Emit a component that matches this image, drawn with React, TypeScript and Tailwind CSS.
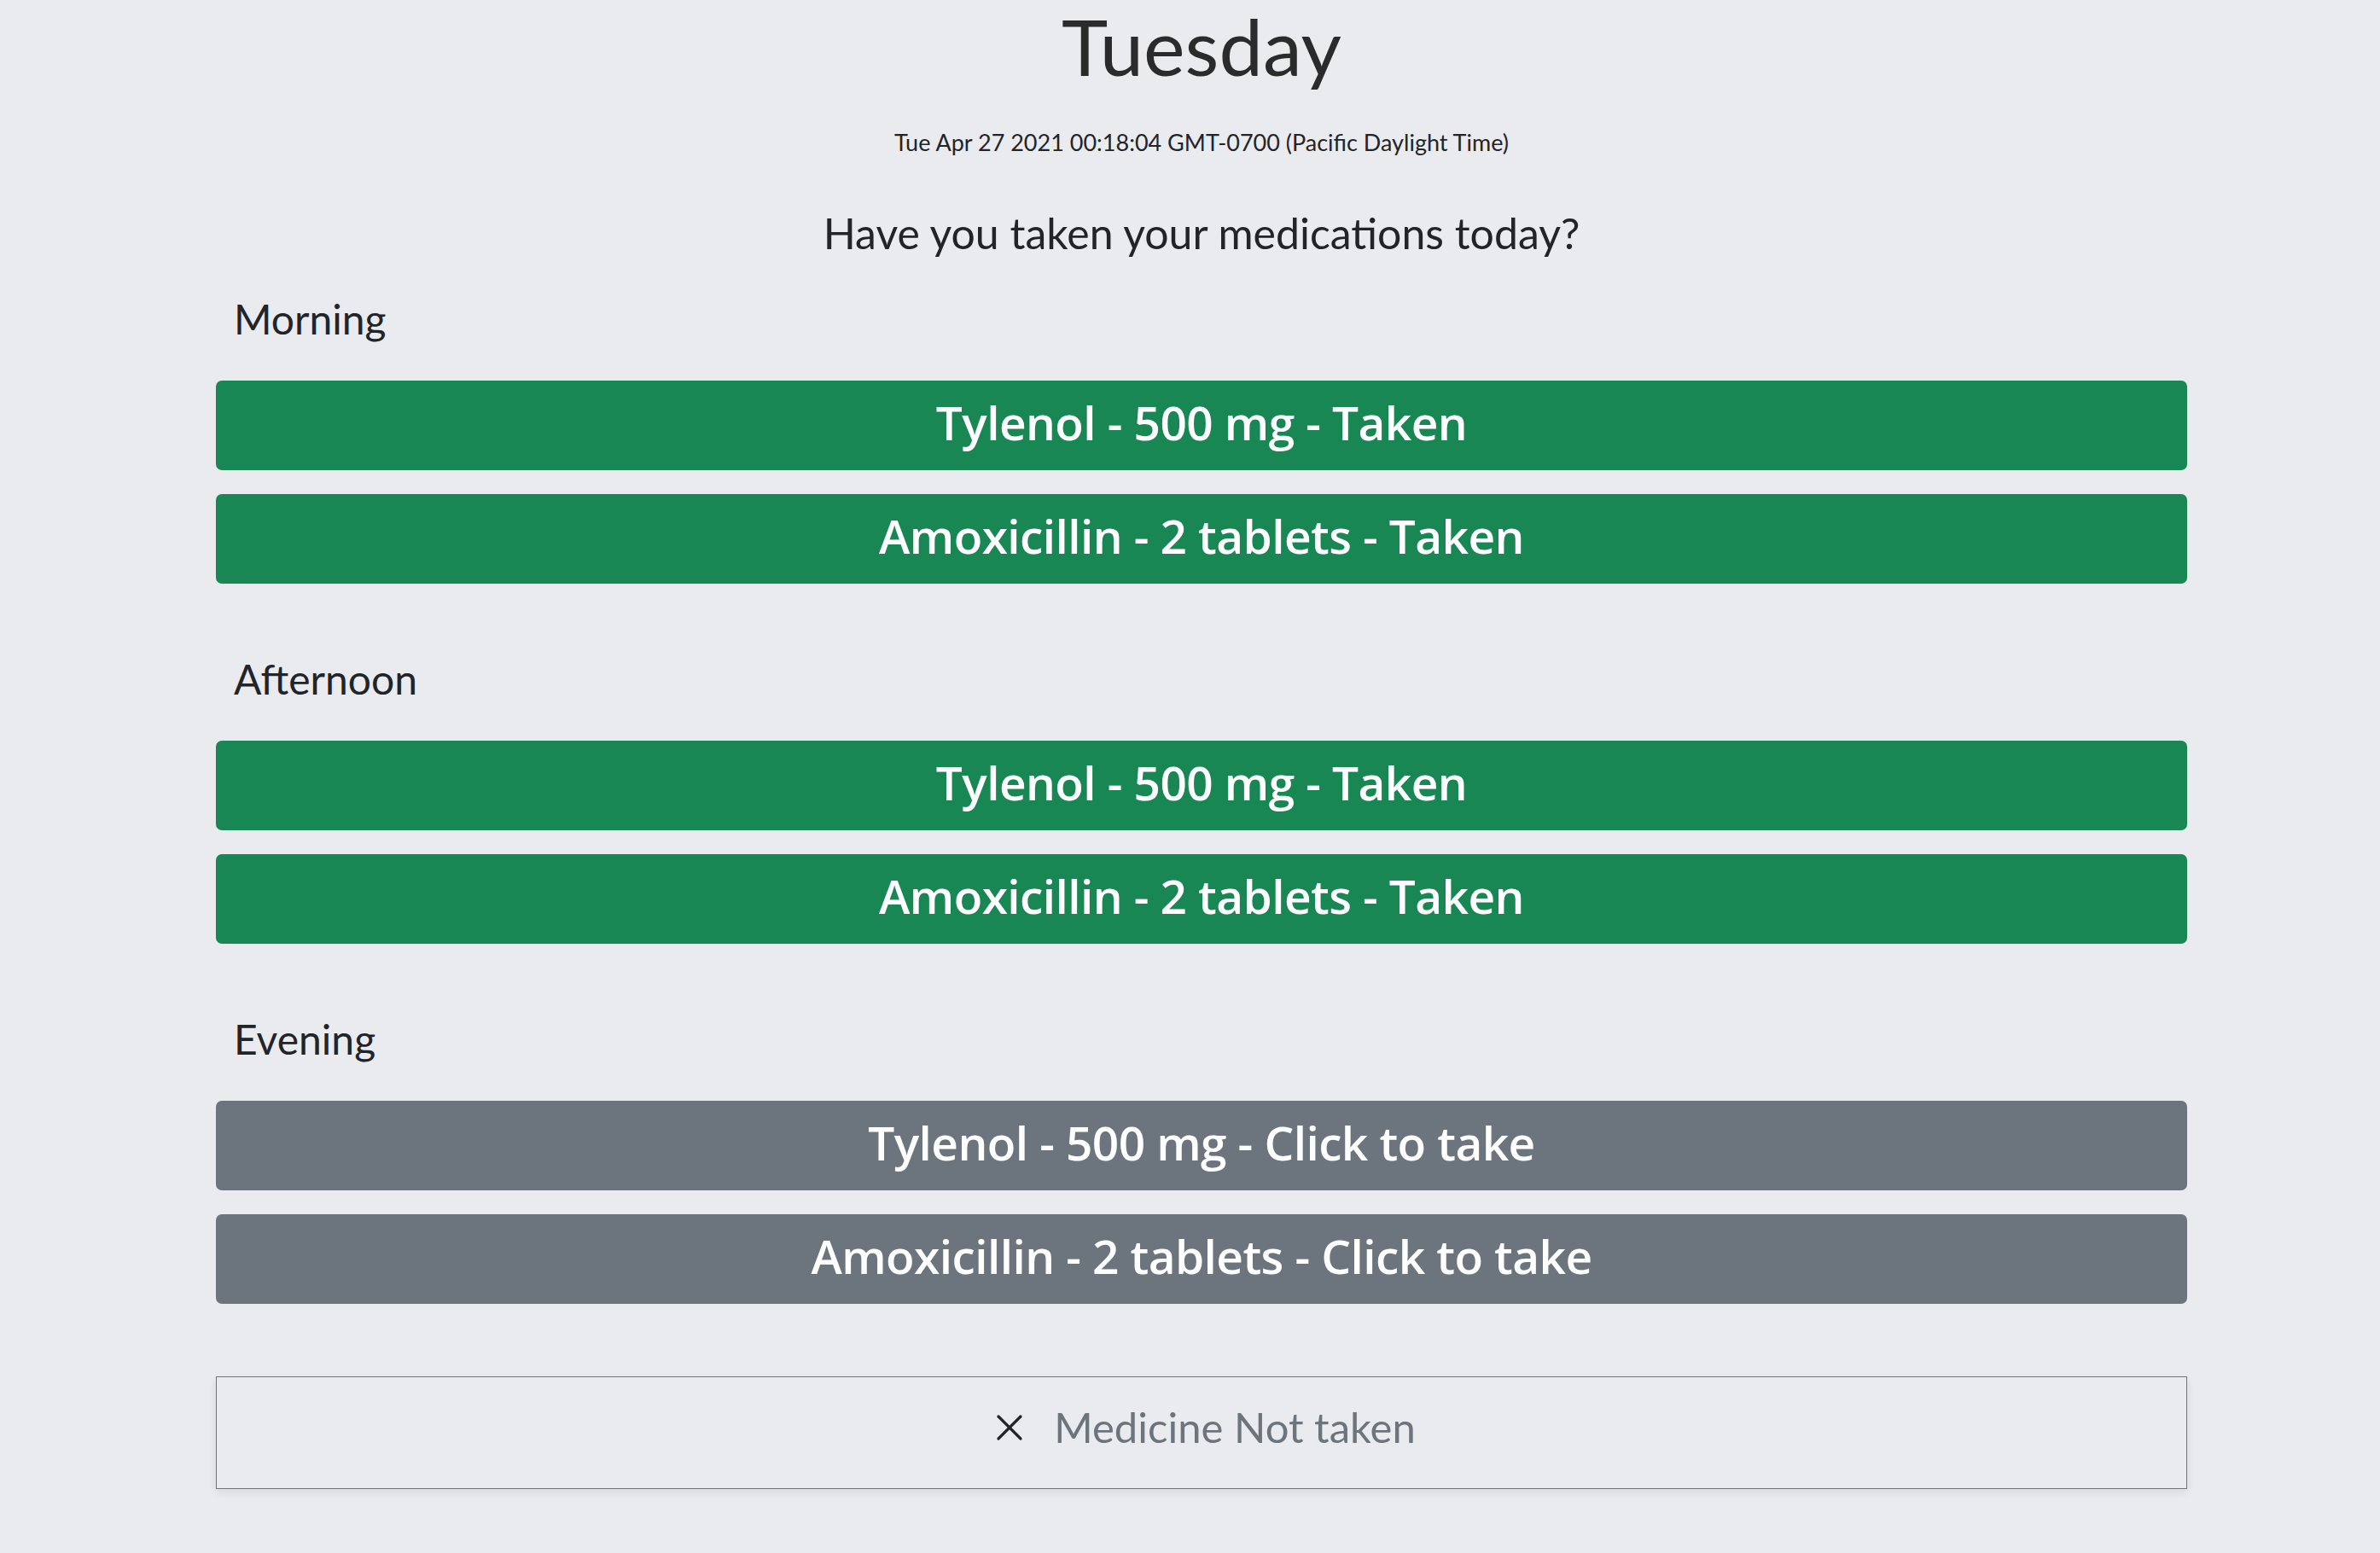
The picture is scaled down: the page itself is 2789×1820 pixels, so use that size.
import { X } from "lucide-react";

type Med = { name: string; dose: string; taken: boolean };

const schedule: { label: string; meds: Med[] }[] = [
    {
        label: "Morning",
        meds: [
            { name: "Tylenol", dose: "500 mg", taken: true },
            { name: "Amoxicillin", dose: "2 tablets", taken: true },
        ],
    },
    {
        label: "Afternoon",
        meds: [
            { name: "Tylenol", dose: "500 mg", taken: true },
            { name: "Amoxicillin", dose: "2 tablets", taken: true },
        ],
    },
    {
        label: "Evening",
        meds: [
            { name: "Tylenol", dose: "500 mg", taken: false },
            { name: "Amoxicillin", dose: "2 tablets", taken: false },
        ],
    },
];

function MedButton({ med }: { med: Med }) {
    return (
        <button
            className={
                med.taken
                    ? "h-[105px] w-full pb-[6px] rounded-[7px] bg-[#198754] text-white text-[55px] font-semibold font-['Open_Sans',sans-serif] tracking-[-0.6px]"
                    : "h-[105px] w-full pb-[6px] rounded-[7px] bg-[#6c757d] text-white text-[55px] font-semibold font-['Open_Sans',sans-serif] tracking-[-0.6px]"
            }
        >
            {med.name} - {med.dose} - {med.taken ? "Taken" : "Click to take"}
        </button>
    );
}

export default function App() {
    return (
        <div className="min-h-screen bg-[#eaebee] text-[#212529] font-['Lato',sans-serif]">
            <div className="ml-[253px] w-[2310px] flex flex-col">
                {/* header */}
                <h1 className="h-[110px] text-center text-[92px] leading-[108px] font-normal text-[#2b2b2b]">
                    Tuesday
                </h1>
                <p className="mt-[42px] text-center text-[27px] leading-[30px]">
                    Tue Apr 27 2021 00:18:04 GMT-0700 (Pacific Daylight Time)
                </p>
                <p className="mt-[61px] text-center text-[50px] leading-[60px]">
                    Have you taken your medications today?
                </p>

                {/* sections */}
                {schedule.map((s, i) => (
                    <div key={s.label} className={i === 0 ? "mt-[41px]" : "mt-[82px]"}>
                        <div className="h-[60px] pl-[21px] text-[48px] leading-[60px]">{s.label}</div>
                        <div className="mt-[42px] flex flex-col gap-[28px]">
                            {s.meds.map((m) => (
                                <MedButton key={m.name} med={m} />
                            ))}
                        </div>
                    </div>
                ))}

                {/* not taken box */}
                <div className="mt-[85px] h-[132px] pb-[12px] border border-[#6c757d] shadow-[0_4px_10px_rgba(0,0,0,0.08)] flex items-center justify-center gap-[26px]">
                    <X className="w-[52px] h-[52px] text-[#212529]" strokeWidth={1.5} />
                    <span className="text-[49px] text-[#6c757d]">Medicine Not taken</span>
                </div>
                <div className="h-[75px]" />
            </div>
        </div>
    );
}
